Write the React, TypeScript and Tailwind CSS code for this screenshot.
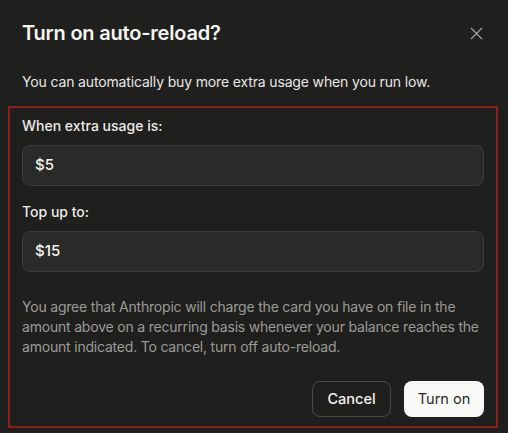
import React from "react";

export default function App() {
  return (
    <div
      className="w-[508px] h-[433px] bg-[#1f1f1e] text-[#f5f4ef] overflow-hidden"
      style={{ fontFamily: "Inter, 'Noto Sans', sans-serif" }}
    >
      {/* Header */}
      <div className="flex items-center justify-between pl-[22px] pr-[25px] pt-[19px]">
        <h2 className="text-[20px] leading-[28px] font-semibold tracking-[-0.2px] text-[#f5f4ef]">
          Turn on auto-reload?
        </h2>
        <button className="w-[14px] h-[14px] flex items-center justify-center text-[#a3a29d]">
          <svg width="13" height="13" viewBox="0 0 13 13" fill="none" stroke="currentColor" strokeWidth="1.2">
            <path d="M1 1L12 12M12 1L1 12" />
          </svg>
        </button>
      </div>

      <p className="px-[22px] mt-[24px] text-[14px] leading-[22px] text-[#e8e7e2] tracking-[-0.15px]">
        You can automatically buy more extra usage when you run low.
      </p>

      {/* Auto-reload form */}
      <div className="mx-[8px] mt-[13px] w-[490px] h-[322px] border-2 border-[#8e1d1d] px-[12px] pt-[8px]">
        <label className="block text-[14px] leading-[20px] font-medium text-[#ecebe6]">
          When extra usage is:
        </label>
        <div className="mt-[9px] h-[41px] rounded-[8px] bg-[#2a2a29] border border-[#3c3c3a] flex items-center px-[12px] text-[15px] font-medium text-[#f5f4ef]">
          $5
        </div>

        <label className="block mt-[16px] text-[14px] leading-[20px] font-medium text-[#ecebe6]">
          Top up to:
        </label>
        <div className="mt-[9px] h-[41px] rounded-[8px] bg-[#2a2a29] border border-[#3c3c3a] flex items-center px-[12px] text-[15px] font-medium text-[#f5f4ef]">
          $15
        </div>

        <p className="mt-[25px] text-[14px] leading-[20px] text-[#9c9b96] tracking-[-0.2px]">
          You agree that Anthropic will charge the card you have on file in the amount above on a recurring basis whenever your balance reaches the amount indicated. To cancel, turn off auto-reload.
        </p>

        <div className="mt-[24px] flex justify-end gap-[13px]">
          <button className="h-[36px] w-[79px] rounded-[8px] border border-[#4a4a47] text-[14.5px] font-medium text-[#f5f4ef]">
            Cancel
          </button>
          <button className="h-[36px] w-[80px] rounded-[8px] bg-[#f8f8f6] text-[14.5px] text-[#2a2a28]">
            Turn on
          </button>
        </div>
      </div>
    </div>
  );
}
